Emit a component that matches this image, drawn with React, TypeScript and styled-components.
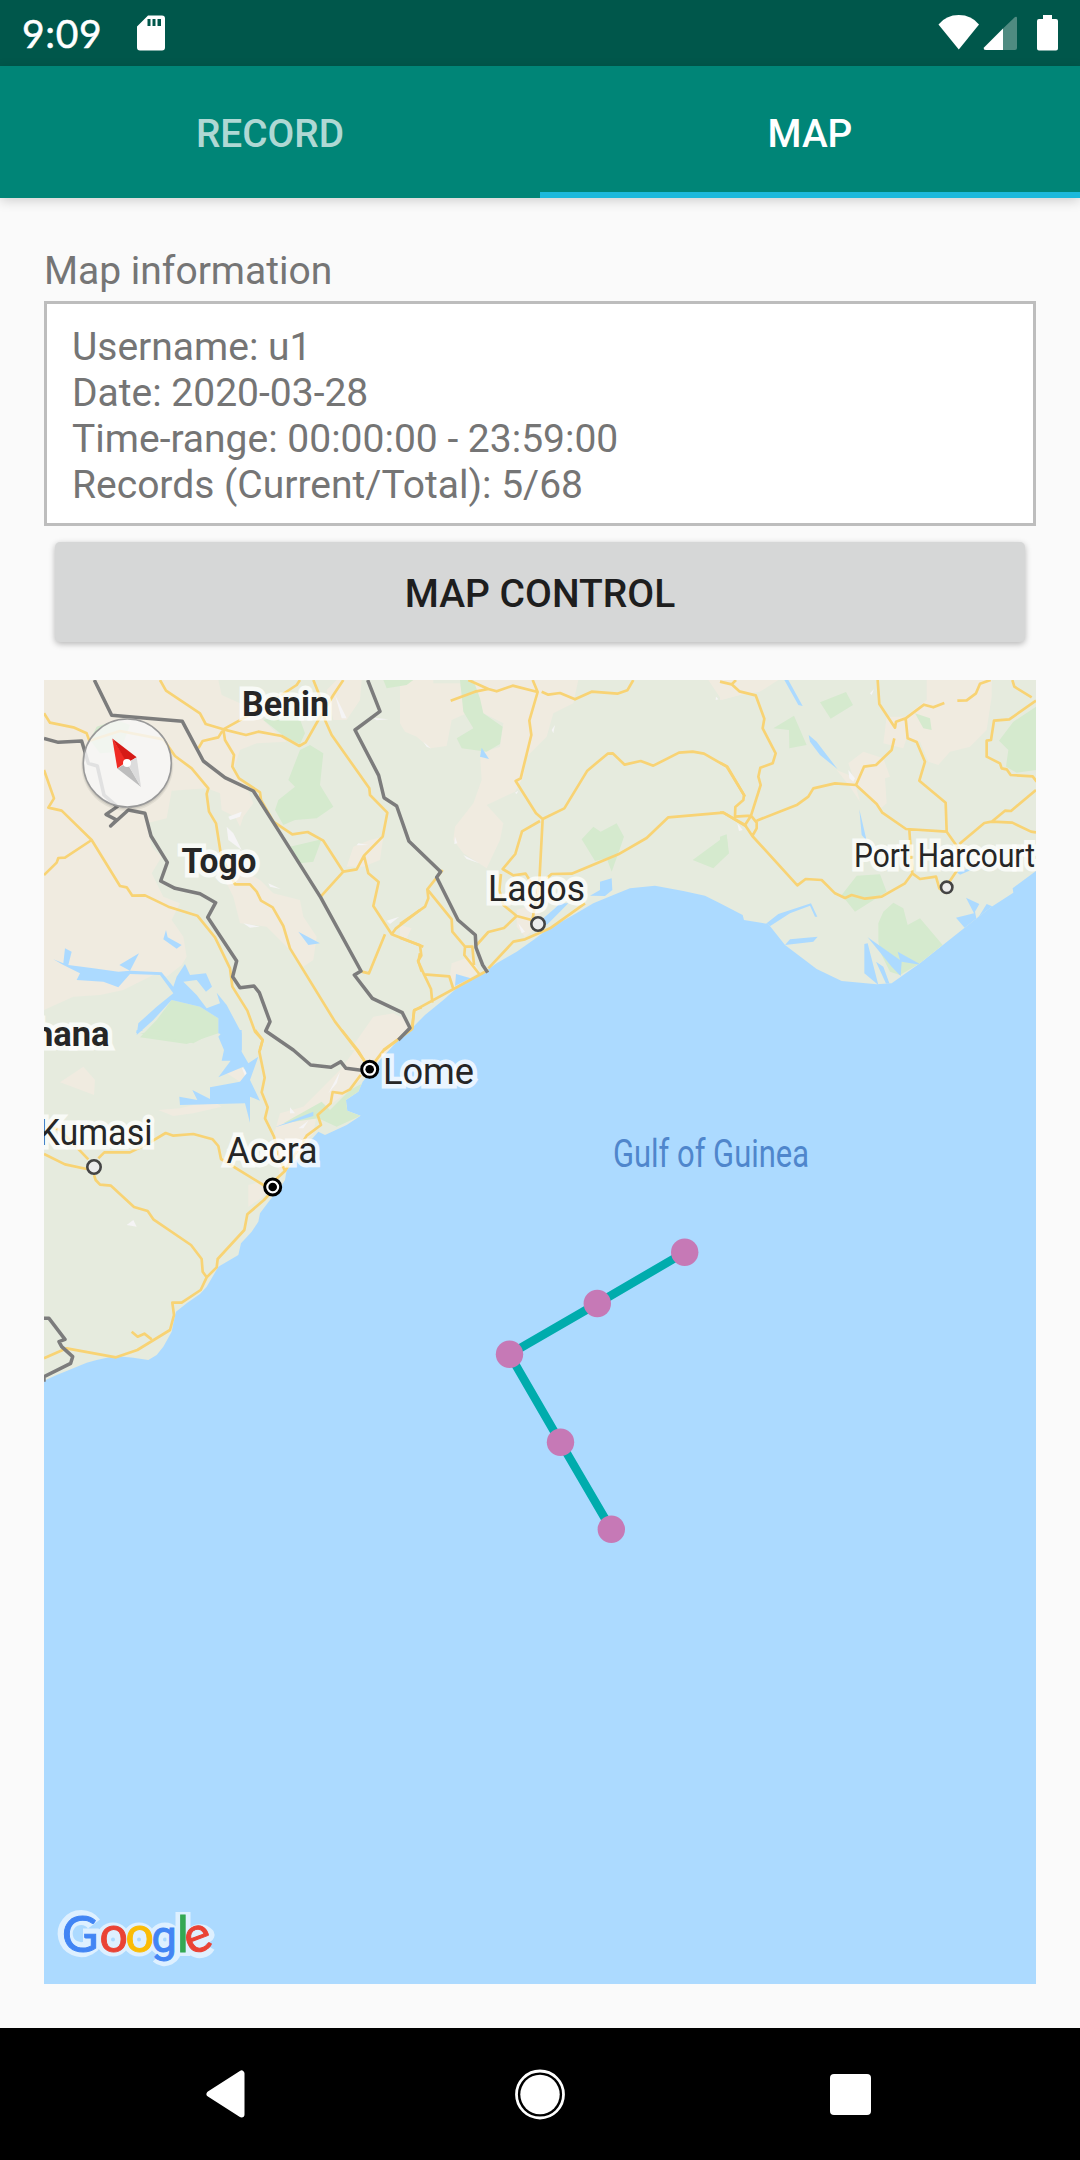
import React from 'react';
import styled, { createGlobalStyle } from 'styled-components';

const GlobalStyle = createGlobalStyle`
  * { box-sizing: border-box; }
  body {
    margin: 0;
    background: #fafafa;
    font-family: Roboto, 'Noto Sans', sans-serif;
  }
`;

const Screen = styled.div`
  width: 1080px;
  height: 2160px;
  display: flex;
  flex-direction: column;
  background: #fafafa;
  overflow: hidden;
`;

const StatusBar = styled.header`
  flex: none;
  height: 66px;
  display: flex;
  align-items: center;
  justify-content: space-between;
  padding: 0 17px 0 22px;
  background: #00574b;
`;

const StatusGroup = styled.div`
  display: flex;
  align-items: center;
  height: 66px;
`;

const Clock = styled.span`
  width: 115px;
  font-family: Lato, sans-serif;
  font-size: 39px;
  line-height: 66px;
  color: #fff;
  -webkit-text-stroke: 0.5px #fff;
  letter-spacing: 0.7px;
`;

const TabBar = styled.nav`
  flex: none;
  display: grid;
  grid-template-columns: 1fr 1fr;
  height: 132px;
  background: #008577;
  box-shadow: 0 3px 11px rgba(0, 0, 0, 0.17);
`;

const Tab = styled.button<{ $active?: boolean }>`
  border: 0;
  border-bottom: 6px solid ${(p) => (p.$active ? '#1cb9db' : 'transparent')};
  padding: 9px 0 0;
  background: none;
  font: 500 38.8px/46px Roboto, sans-serif;
  color: ${(p) => (p.$active ? '#fff' : 'rgba(255, 255, 255, 0.7)')};
`;

const Content = styled.main`
  flex: 1;
  display: flex;
  flex-direction: column;
  padding: 50px 44px 44px;
`;

const Caption = styled.h2`
  margin: 0 0 7px;
  font-weight: 400;
  font-size: 39px;
  line-height: 46px;
  color: #757575;
`;

const InfoBox = styled.section`
  height: 225px;
  border: 3px solid #bdbdbd;
  padding: 20px 25px;
  background: #fff;
`;

const InfoLine = styled.p`
  margin: 0;
  font-size: 39px;
  line-height: 46px;
  color: #757575;
`;

const ControlButton = styled.button`
  height: 100px;
  margin: 16px 11px 38px;
  border: 0;
  border-radius: 5px;
  padding: 4px 0 0;
  background: #d6d7d7;
  box-shadow: 0 2px 6px rgba(0, 0, 0, 0.28);
  font: 500 39px/46px Roboto, sans-serif;
  color: #1e1e1e;
`;

const MapFrame = styled.section`
  flex: none;
  height: 1304px;
  overflow: hidden;
  background: #acdaff;
`;

const MapCanvas = styled.svg`
  display: block;
  width: 992px;
  height: 1304px;
`;

const PlaceName = styled.text<{ $bold?: boolean; $water?: boolean }>`
  font-family: Roboto, sans-serif;
  font-weight: ${(p) => (p.$bold ? 700 : 400)};
  fill: ${(p) => (p.$water ? '#4f86cc' : '#262626')};
  stroke: ${(p) => (p.$water ? 'none' : 'rgba(255, 255, 255, 0.75)')};
  stroke-width: 9px;
  paint-order: stroke;
`;

const Wordmark = styled.text`
  font-family: Lato, sans-serif;
  font-size: 50px;
  stroke-width: 1px;
`;

const NavBar = styled.footer`
  flex: none;
  height: 132px;
  display: flex;
  align-items: center;
  justify-content: space-between;
  padding: 0 206px;
  background: #000;
`;

/* Terrain and roads are drafted on four sheets at three units per pixel. */
type Sheet = {
  x: number;
  y: number;
  sand: string;
  park: string;
  water: string;
  town: string;
  roads: string;
  borders: string;
};

const sheets: Sheet[] = [
  {
    x: 40,
    y: 670,
    sand: `M12 30H535L545 75L600 100L670 150L690 170L740 215L650 220L600 240L580 300L620 350L640 400L610 440L600 470L585 440L545 420L540 370L500 355L395 362L380 445L320 460L335 530L365 560L335 610L370 680L420 700L395 750L430 800L440 860L425 885L380 920L350 910L250 960L180 975L100 980L12 1020Z
      M860 60L890 30H965L960 90L920 150L880 150Z
      M540 540L590 590L660 630L700 670L780 690L790 740L830 800L820 870L790 890L740 830L680 770L600 760L580 680L560 640Z
      M940 530L990 510L1030 500L1020 570L970 590L920 590Z
      M1000 1040L1060 1030L1090 1045L1105 1075L1030 1140H930Z
      M1080 30H1180V120L1110 110L1080 80Z`,
    park: `M780 240L810 225L850 250L840 345L880 410L830 445L765 450L730 465L705 420L715 390L765 350L745 330Z
      M670 150L770 120L795 190L780 222L740 205Z
      M750 530L845 508L820 575L780 580Z
      M170 170L230 150L270 165L240 245L180 250L150 210Z
      M395 990L480 1010L535 1045L535 1090L440 1122L300 1102L350 1050Z
      M1030 30H1120L1100 45L1040 55Z`,
    water: `M40 868L70 880L75 835L95 845L85 885L160 895L235 905L270 902L238 885L297 850L270 902L365 907L400 950L410 920L435 882L450 915L498 910L516 950L498 965L470 930L430 935L470 975L500 1015L540 1000L530 968L560 1005L605 1090V1140H555L550 1095L535 1090L535 1045L480 1010L395 990L340 1050L290 1095L295 1060L350 1010L400 970L360 915L270 912L235 952L190 935L110 930L120 910L70 885Z
      M378 780L383 802L425 825L410 836L370 808Z M775 785L840 820L805 825Z`,
    town: `M565 440L605 425L600 440L570 450Z M560 470L580 490L605 540L565 510Z M885 75L920 145L905 145Z M610 760L660 770L630 773Z M685 640L722 657L690 650Z M1040 752L1078 740L1050 762Z M1000 143L1045 148L1010 151Z M955 520L985 525L950 526Z`,
    roads: `M360 30L378 62L480 130L497 162L550 178L655 120L770 45L780 30
      M550 178L618 195L655 185L725 198L778 228L797 217L835 150L880 75L910 30 M820 30L838 75L855 150L875 195L988 355L990 375L1042 428L1028 500L972 557L950 598L910 605L842 680
      M972 557L985 610L1016 636L1000 708L1055 793L1150 830 M1055 793L1068 775L1140 720 M1035 793L987 910L965 905
      M475 235L488 213L535 202L550 178L555 210L582 255L577 290L597 325L660 367L663 390L700 455L757 493L803 486L850 512L910 605
      M12 130L30 158L100 172L140 190L148 212L240 183L370 208L405 258L455 295L505 355L500 372L507 425L528 460L543 555L585 643L630 643L650 665L663 692L698 712L730 768L750 835L885 1055L950 1140L975 1175
      M12 300L42 385L25 413L65 422L155 510L240 648L260 652L277 677L315 676L385 710L472 737L525 802L570 895L577 950L622 1022L645 1085L668 1110L660 1140
      M12 615L50 578L55 564L75 563L155 510 M1030 1140L1115 1078L1123 1020L1145 1012 M1140 850L1135 875L1145 905`,
    borders: `M163 30L215 136L427 154L490 273L555 323L640 363L700 457L842 682L963 903L943 915L997 985L1087 1028L1110 1074L1075 1110
      M12 205L55 217L125 213L145 280L172 288L192 375L232 410L198 433L230 450L212 468L265 420L315 430L333 498L382 577L362 633L405 655L480 671L527 698L503 742L590 873L578 920L600 953L642 948L658 968L690 1055L677 1083L760 1140L812 1185L873 1192L902 1175L918 1195L975 1202
      M983 30L1020 124L945 180L1016 316L1032 383L1070 408L1107 514L1202 605L1190 622L1254 750L1306 795L1308 833L1328 885L1343 908
      M12 1945L27 1945L75 2008L57 2015L65 2030L98 2060L92 2080L12 2120V2135`,
  },
  {
    x: 400,
    y: 670,
    sand: `M0 40H180L200 130L155 150L140 228L90 235L50 200L15 185L0 160Z
      M210 30H535L520 100L460 130L440 200L380 260L370 320L345 365L260 405L310 460L300 510L260 595L190 550L160 510L165 470L220 400L245 330L240 250L300 230L310 160L250 130L235 80Z
      M925 30H1020L1050 65L965 90Z M155 880L210 860L240 905L165 950L150 915Z M0 765L35 775L20 805L0 805Z M350 720L410 700L430 760L375 800L350 770Z`,
    park: `M180 30H220L240 85L250 130L308 170L300 222L260 245L185 235L170 205L220 175L190 125Z
      M545 508L580 470L602 485L650 460L672 500L655 550L635 605L620 565L585 573Z M878 570L980 495L987 550L940 595Z`,
    water: `M245 233L267 267L240 260Z M165 948L168 912L212 925Z M570 677L600 660V635L635 625L637 660L615 678Z M430 745L465 715L480 700L505 700L465 740L440 765Z`,
    town: `M70 215L92 235L80 230Z M165 500L172 520L163 522Z M190 555L238 580L200 567Z M455 180L465 165L460 190Z M355 760L375 785L365 790Z M948 80L955 88L947 90Z M345 368L355 362L350 372Z`,
    roads: `M152 92L225 65L265 57L205 30 M265 57L290 64L338 47L413 66L398 30 M425 65L445 74L480 69L525 88L575 65L652 71L682 61L700 30
      M413 66L388 152L394 195L362 325L347 333L408 430L428 447L493 415L562 302L623 251L638 250L674 284L722 273L760 287L837 248L878 245L912 251L980 290L1035 380
      M428 447L418 635L398 745 M420 453L366 484L346 552L308 597L340 616L377 611L395 640 M440 625L455 612L515 611L655 553L740 504L805 442L970 428L1040 470
      M303 612L298 660L310 705L350 738L395 750 M350 738L312 774L265 786L230 825 M555 700L450 775L375 808L340 815L265 895
      M128 600L82 658L85 685L75 710L0 762 M82 658L155 748L157 785L195 830H217L222 885 M195 830L193 855L240 915
      M0 803L60 826L64 857L54 873L72 913L93 957L97 998 M72 913L148 919L160 957 M265 900L42 1022L37 1078`,
    borders: ``,
  },
  {
    x: 720,
    y: 670,
    sand: `M0 30H175L120 65L60 75L0 90Z M620 30H815V80L800 180L750 230L690 245L655 285L625 275L600 215L560 205L550 235L490 220L500 140L555 140L620 90Z
      M430 245L490 265L510 320L495 325L500 400L480 418L410 350L385 280Z M350 300L400 320L420 395L390 350Z`,
    park: `M300 97L378 66L399 105L332 146Z M160 175L222 137L260 225L208 235L207 180Z
      M948 110L880 155L837 212L865 240L858 290L890 308L948 300Z M0 500L20 493L25 550L0 573Z
      M365 675L410 617L480 613L500 665L405 725Z M475 760L490 725L520 698L550 715L563 765L600 745L668 825L600 880L540 915L510 905L485 855L475 815Z M585 130L630 145L635 180L610 175Z`,
    water: `M193 30H205L248 108L235 105Z M266 195L290 215L353 298L300 255L270 215Z M418 418L440 512L425 495Z
      M137 762L175 732L273 700L292 740L285 740L270 707L210 730L145 772Z M195 825L210 808L293 800L280 815Z
      M433 822L443 820L475 945L433 910Z M443 802L540 870L533 845L605 885L545 875L542 918L515 890Z M468 875L490 890L510 945H500Z
      M738 683L778 702L765 725L770 750L735 775L708 743L762 730Z M800 702L820 710L770 750Z M710 607L800 580L720 614Z`,
    town: `M385 300L405 325L400 335L388 325Z M52 460L68 480L57 483Z M450 70L462 57L455 75Z`,
    roads: `M0 35L35 43L48 30 M35 43L58 64L107 76L133 146L128 175L167 250L158 280L121 293L115 320L122 345L93 437
      M0 278L22 290L72 375L70 390L46 411L45 440L93 437L110 458V475L97 498L75 465L93 437 M0 428H10L75 465L97 498L232 646L257 627L305 630L345 670L375 684L395 675L435 686L485 680L555 640L577 610L568 480
      M110 452L232 404L265 380L280 355L345 340L408 345L432 290L468 285L515 240L523 205 M473 30L478 102L525 173L528 155L557 145L612 104L640 112L673 99 M557 145L563 205L590 216L615 275L598 332L677 398L680 485L712 530V600L685 640
      M408 345L470 402L487 428L558 477L680 485 M577 610L600 627L648 620L658 655L680 670 M712 92L740 91L768 70L780 41L812 30 M877 30L883 50L935 82 M948 92L868 148L822 152L813 210L800 212V260L840 280L845 295L860 298L872 315L938 319L950 335
      M718 522L793 459L815 455L855 422L873 423L948 360 M815 455L877 458L933 485L948 487`,
    borders: ``,
  },
  {
    x: 40,
    y: 1030,
    sand: `M60 157L130 110L165 150L162 195Z M720 250L790 230L900 120L990 0H1075V30L1000 110L930 180L830 255L820 310L750 380L715 440L670 500L625 530V465L720 440L700 320Z M355 240L420 235L460 225L530 220L545 230L460 250L400 258Z M545 120L610 115L625 130L600 155Z`,
    park: `M730 280L845 215L870 240L930 180L968 160L955 185L918 210L922 242L962 257L890 290L835 265Z M300 10L400 0H535L460 40Z`,
    water: `M552 0H605V65L625 100L655 80L630 150L660 212L630 200V278L615 220L420 225L418 200L472 210L457 180L510 207V172L600 155L620 130L610 110L535 142L572 92H545L552 60L535 20Z M705 292L820 245V258Z M288 10L310 0H290Z`,
    town: `M865 190L900 125L890 160Z M750 232L765 250L750 250Z M605 112L625 125L615 138Z M775 295L805 272L790 295Z M260 585L280 570L290 590Z`,
    roads: `M645 0L668 30L658 65L674 143L665 187L683 232L675 265L702 320L718 385L735 423L700 455
      M905 0L953 60L975 95 M1073 30L1030 62L1005 95 M962 135L930 178L907 190L878 186L872 220L833 255L843 285L800 317L735 423 M700 480L672 510L622 553L613 600L533 687L530 712L500 742L482 780L425 818H397L402 855L390 900L292 960L228 982L80 955L12 985
      M275 905L293 920L313 911L335 928 M12 372L75 403L140 417 M30 290L60 300L145 388 M175 385L193 367H270L320 343L377 309L400 317L460 312L518 328L535 348L543 387L675 468
      M162 435L167 450L180 464L213 467L282 531L323 543L340 568L453 645L485 687L488 725L500 742`,
    borders: ``,
  },
];

const coast = `M12 30H2988V603L2918 655L2920 668L2855 710L2810 745L2740 800L2640 880L2555 940L2510 943L2405 933L2330 897L2235 825L2185 762L2112 750L2108 735L2040 700L1995 677L1930 663L1845 647L1770 655L1720 675L1660 700L1600 735L1520 780L1480 810L1430 845L1370 880L1320 915L1250 955L1210 990L1155 1035L1120 1070L1075 1110L1020 1170L990 1210L968 1235L955 1265L918 1290L922 1322L962 1337L920 1365L855 1395L835 1385L800 1425L775 1465L740 1500L735 1530L720 1555L690 1590L660 1630L655 1655L635 1685L603 1720L595 1755L535 1790L515 1825L500 1850L480 1872L440 1900L408 1925L400 1960L395 1985L370 2030L350 2055L325 2070L280 2063L225 2058L170 2070L140 2078L100 2095L50 2115L12 2132Z`;

const terrain = [
  { kind: 'sand', color: '#f0ebe0' },
  { kind: 'park', color: '#d5eace' },
  { kind: 'town', color: '#f5f4f5' },
  { kind: 'water', color: '#acdaff' },
] as const;

const route = [
  [684.7, 1252.3],
  [597.3, 1303.5],
  [509.5, 1354.3],
  [560.5, 1442.3],
  [611.3, 1529.3],
];

const letters = [
  { ch: 'G', x: 62, color: '#4285f4' },
  { ch: 'o', x: 99.5, color: '#ea4335' },
  { ch: 'o', x: 125.5, color: '#fbbc05' },
  { ch: 'g', x: 151.5, color: '#4285f4', font: 'Roboto' },
  { ch: 'l', x: 177, color: '#34a853' },
  { ch: 'e', x: 190, color: '#ea4335', tilt: -20 },
];

const Town = ({ x, y, r = 6.7 }: { x: number; y: number; r?: number }) => (
  <circle cx={x} cy={y} r={r} fill="#ececec" stroke="#444" strokeWidth="2.6" />
);

const Capital = ({ x, y }: { x: number; y: number }) => (
  <g>
    <circle cx={x} cy={y} r="8" fill="#fff" stroke="#000" strokeWidth="3" />
    <circle cx={x} cy={y} r="4.3" />
  </g>
);

const Compass = () => (
  <g>
    <circle cx="127.3" cy="765" r="46" fill="#000" opacity="0.06" />
    <circle cx="127.3" cy="764.5" r="45" fill="#000" opacity="0.08" />
    <circle cx="127.3" cy="763" r="44" fill="#fff" fillOpacity="0.8" stroke="#999" strokeWidth="1.5" />
    <path d="M112.3 738.5L127 761.5L117.3 768.5Z" fill="#f02b24" />
    <path d="M112.3 738.5L136.7 757.3L127 763Z" fill="#d61a16" />
    <path d="M117.3 768.5L127 763L141 787Z" fill="#bdbdbd" />
    <path d="M136.7 757.3L127 763L141 787Z" fill="#dcdcdc" />
    <circle cx="127" cy="763" r="4" fill="#fff" />
  </g>
);

const Google = () => (
  <g>
    <g fill="none" stroke="#def0ff" strokeWidth="15" strokeLinejoin="round">
      <path d="M94 1924A16 16 0 1 0 97 1936H83" />
      <circle cx="113" cy="1939.5" r="9.500" />
      <circle cx="139" cy="1939.5" r="9.500" />
      <circle cx="165" cy="1939.5" r="9.500" />
      <path d="M174 1931V1948A9.500 9.500 0 0 1 158 1956" />
      <path d="M183 1912V1956" />
      <path d="M192 1942L207 1935A9.500 9.500 0 1 0 208 1946" />
    </g>
    <Wordmark>
      {letters.map((l) => (
        <tspan
          key={l.x}
          x={l.x}
          y={l.tilt ? 1955.5 : 1951.5}
          rotate={l.tilt ?? 0}
          fontFamily={l.font}
          fontSize={l.font ? 45 : undefined}
          fill={l.color}
          stroke={l.color}
        >
          {l.ch}
        </tspan>
      ))}
    </Wordmark>
  </g>
);

const RegionMap = () => (
  <MapCanvas viewBox="44 680 992 1304" aria-label="Gulf of Guinea">
    <defs>
      <clipPath id="land">
        <path d={coast} transform="translate(40 670) scale(0.33333)" />
      </clipPath>
    </defs>
    <g clipPath="url(#land)">
      <rect x="44" y="680" width="992" height="720" fill="#e6ebde" />
      {terrain.map(({ kind, color }) => (
        <g key={kind} fill={color}>
          {sheets.map((s, i) => (
            <path key={i} d={s[kind]} transform={`translate(${s.x} ${s.y}) scale(0.33333)`} />
          ))}
        </g>
      ))}
    </g>
    <g fill="none" stroke="#f8d374" strokeWidth="8" strokeLinejoin="round">
      {sheets.map((s, i) => (
        <path key={i} d={s.roads} transform={`translate(${s.x} ${s.y}) scale(0.33333)`} />
      ))}
    </g>
    <g fill="none" stroke="#7c7c7c" strokeWidth="10.5" strokeLinejoin="round">
      {sheets.map((s, i) => (
        <path key={i} d={s.borders} transform={`translate(${s.x} ${s.y}) scale(0.33333)`} />
      ))}
    </g>

    <PlaceName $bold x="242" y="715.8" fontSize="34.5" textLength="87" lengthAdjust="spacingAndGlyphs">Benin</PlaceName>
    <PlaceName $bold x="181.5" y="872.8" fontSize="34.5" textLength="75" lengthAdjust="spacingAndGlyphs">Togo</PlaceName>
    <PlaceName $bold x="109.5" y="1045.8" fontSize="34.5" textAnchor="end">Ghana</PlaceName>
    <PlaceName x="226.5" y="1162.9" fontSize="37.5" textLength="91" lengthAdjust="spacingAndGlyphs">Accra</PlaceName>
    <PlaceName x="152.5" y="1144.5" fontSize="37.5" textLength="114" lengthAdjust="spacingAndGlyphs" textAnchor="end">Kumasi</PlaceName>
    <PlaceName x="383" y="1084" fontSize="37.5" textLength="91" lengthAdjust="spacingAndGlyphs">Lome</PlaceName>
    <PlaceName x="488" y="901" fontSize="37.5" textLength="97" lengthAdjust="spacingAndGlyphs">Lagos</PlaceName>
    <PlaceName x="854" y="867.3" fontSize="32.5" textLength="181" lengthAdjust="spacingAndGlyphs">Port Harcourt</PlaceName>
    <PlaceName $water x="613" y="1166.7" fontSize="39" textLength="196" lengthAdjust="spacingAndGlyphs">Gulf of Guinea</PlaceName>

    <Town x={538} y={924} />
    <Town x={946.7} y={887.3} r={5.7} />
    <Town x={94} y={1167} />
    <Capital x={272.7} y={1187} />
    <Capital x={369.7} y={1069.3} />

    <polyline points={route.map((p) => p.join(',')).join(' ')} fill="none" stroke="#00acad" strokeWidth="8.5" />
    {route.map(([cx, cy]) => (
      <circle key={cx} cx={cx} cy={cy} r="13.7" fill="#c679b6" />
    ))}

    <Compass />
    <Google />
  </MapCanvas>
);

const SdCardIcon = () => (
  <svg width="28" height="36" viewBox="0 0 28 36">
    <path
      fillRule="evenodd"
      fill="#fff"
      d="M11 0.5H25a3 3 0 0 1 3 3V32.500a3 3 0 0 1-3 3H3a3 3 0 0 1-3-3V11.500ZM10.500 4V11H13.500V4ZM15.500 4V11H18.500V4ZM20.500 4V11H24V4Z"
    />
  </svg>
);

const SignalIcons = () => (
  <svg width="125" height="40" viewBox="0 0 125 40">
    <path d="M0.500 12.500Q8 3 20.800 3T41 12.500L20.800 37.500Z" fill="#fff" />
    <path d="M77 5Q79 4 79 6V36Q79 38 77 38H65V16.500Z" fill="#4f8b81" />
    <path d="M65 16.500V38H48Q45 38 46 35.500Z" fill="#fff" />
    <path d="M105 3H114V7H118a2 2 0 0 1 2 2V36.500a2 2 0 0 1-2 2H101a2 2 0 0 1-2-2V9a2 2 0 0 1 2-2H105Z" fill="#fff" />
  </svg>
);

const StatusIcons = styled.div`
  display: flex;
  width: 125px;
  margin-bottom: 2px;
`;

const info = [
  'Username: u1',
  'Date: 2020-03-28',
  'Time-range: 00:00:00 - 23:59:00',
  'Records (Current/Total): 5/68',
];

export default function App() {
  return (
    <>
      <GlobalStyle />
      <Screen>
        <StatusBar>
          <StatusGroup>
            <Clock>9:09</Clock>
            <SdCardIcon />
          </StatusGroup>
          <StatusIcons>
            <SignalIcons />
          </StatusIcons>
        </StatusBar>
        <TabBar>
          <Tab>RECORD</Tab>
          <Tab $active>MAP</Tab>
        </TabBar>
        <Content>
          <Caption>Map information</Caption>
          <InfoBox>
            {info.map((line) => (
              <InfoLine key={line}>{line}</InfoLine>
            ))}
          </InfoBox>
          <ControlButton>MAP CONTROL</ControlButton>
          <MapFrame>
            <RegionMap />
          </MapFrame>
        </Content>
        <NavBar>
          <svg width="42" height="48" viewBox="0 0 42 48">
            <path d="M35.500 3.500V44.500L3.500 24Z" fill="#fff" stroke="#fff" strokeWidth="6" strokeLinejoin="round" />
          </svg>
          <svg width="52" height="52" viewBox="0 0 52 52">
            <circle cx="27" cy="26.500" r="23.500" fill="none" stroke="#fff" strokeWidth="2.8" />
            <circle cx="27" cy="26.500" r="19.700" fill="#fff" />
          </svg>
          <svg width="44" height="44" viewBox="0 0 44 44">
            <rect x="0" y="2" width="41" height="41" rx="4" fill="#fff" />
          </svg>
        </NavBar>
      </Screen>
    </>
  );
}
